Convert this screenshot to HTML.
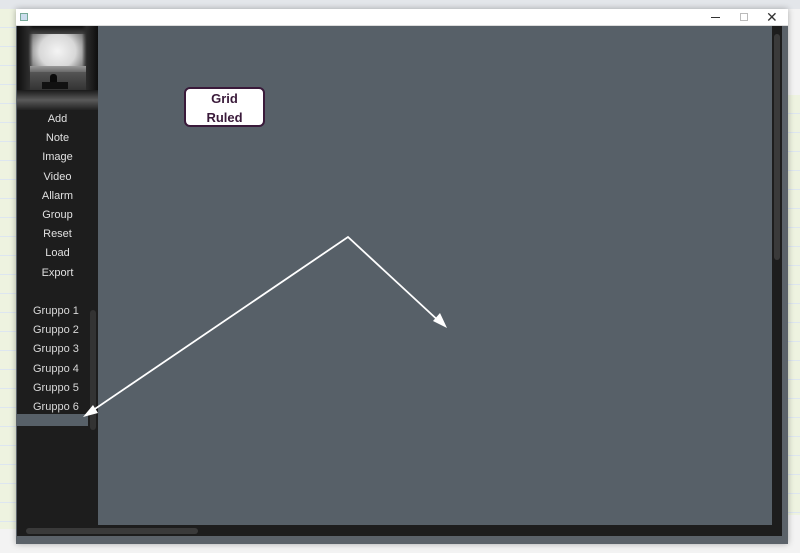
<!DOCTYPE html>
<html><head><meta charset="utf-8"><style>
*{margin:0;padding:0;box-sizing:border-box}
body{width:800px;height:553px;overflow:hidden;background:#f3f3f3;font-family:"Liberation Sans",sans-serif;position:relative}
.abs{position:absolute}
</style></head><body>
<div class="abs" style="left:0;top:0;width:800px;height:9px;background:#e3e6ea"></div>
<div class="abs" style="left:0;top:9px;width:16px;height:520px;background:repeating-linear-gradient(#eef3e0 0 18px,#dde6f0 18px 19px)"></div>
<div class="abs" style="left:788px;top:95px;width:12px;height:420px;background:repeating-linear-gradient(#eef3e0 0 18px,#dde6f0 18px 19px)"></div>
<div class="abs" style="left:16px;top:9px;width:772px;height:535px;background:#5b6269;box-shadow:0 0 6px rgba(0,0,0,.3)"></div>
<div class="abs" style="left:16px;top:9px;width:772px;height:17px;background:#fff;border-bottom:1px solid #ddd"></div>
<div class="abs" style="left:20px;top:13px;width:8px;height:8px;border:1px solid #7a9;background:#cde"></div>
<div class="abs" style="left:711px;top:17px;width:9px;height:1px;background:#333"></div>
<div class="abs" style="left:740px;top:13px;width:8px;height:8px;border:1px solid #bbb"></div>
<div class="abs" style="left:766px;top:9px;font-size:14px;color:#333;line-height:17px">✕</div>
<div class="abs" style="left:17px;top:26px;width:765px;height:510px;background:#1d1d1d"></div>
<div class="abs" style="left:98px;top:26px;width:674px;height:499px;background:#576068"></div>
<div class="abs" style="left:774px;top:34px;width:6px;height:226px;background:#3a3a3a;border-radius:3px"></div>
<div class="abs" style="left:26px;top:528px;width:172px;height:6px;background:#3a3a3a;border-radius:3px"></div>
<!-- photo -->
<div class="abs" style="left:17px;top:26px;width:81px;height:84px;background:radial-gradient(ellipse 45% 40% at 50% 30%,#f4f4f4 0%,#d8d8d8 50%,#777 85%,#333 100%)"></div>
<div class="abs" style="left:17px;top:26px;width:81px;height:8px;background:linear-gradient(#111,#444)"></div>
<div class="abs" style="left:17px;top:26px;width:16px;height:84px;background:linear-gradient(90deg,#0e0e0e,#2a2a2a 70%,rgba(60,60,60,0))"></div>
<div class="abs" style="left:82px;top:26px;width:16px;height:84px;background:linear-gradient(270deg,#0e0e0e,#2a2a2a 70%,rgba(60,60,60,0))"></div>
<div class="abs" style="left:30px;top:66px;width:56px;height:6px;background:linear-gradient(#9a9a9a,#6a6a6a)"></div>
<div class="abs" style="left:30px;top:72px;width:56px;height:18px;background:linear-gradient(#555,#333)"></div>
<div class="abs" style="left:17px;top:90px;width:81px;height:20px;background:linear-gradient(#1a1a1a,#5a5a5a 50%,#222)"></div>
<div class="abs" style="left:50px;top:74px;width:7px;height:10px;background:#0a0a0a;border-radius:3px 3px 0 0"></div>
<div class="abs" style="left:42px;top:82px;width:26px;height:7px;background:#111"></div>
<div class="abs" style="left:17px;top:110px;width:81px;color:#e0e0e0;font-size:11px;text-align:center;line-height:19.2px">
Add<br>Note<br>Image<br>Video<br>Allarm<br>Group<br>Reset<br>Load<br>Export</div>
<div class="abs" style="left:90px;top:310px;width:6px;height:120px;background:#333;border-radius:3px"></div>
<div class="abs" style="left:33px;top:302px;color:#d8d8d8;font-size:11px;line-height:19.2px">
Gruppo 1<br>Gruppo 2<br>Gruppo 3<br>Gruppo 4<br>Gruppo 5<br>Gruppo 6</div>
<div class="abs" style="left:17px;top:414px;width:71px;height:12px;background:#576068"></div>
<div class="abs" style="left:184px;top:87px;width:81px;height:40px;background:#fff;border:2px solid #3a1a3a;border-radius:6px;text-align:center;font-weight:bold;font-size:13px;color:#3a1a3a;line-height:19px">Grid<br>Ruled</div>
<svg class="abs" style="left:0;top:0" width="800" height="553">
<polyline points="86,415 348,237 442,324" fill="none" stroke="#fff" stroke-width="1.8"/>
<polygon points="83,417 93,405 98,413" fill="#fff"/>
<polygon points="447,328 433,321 440,313" fill="#fff"/>
</svg>
</body></html>
